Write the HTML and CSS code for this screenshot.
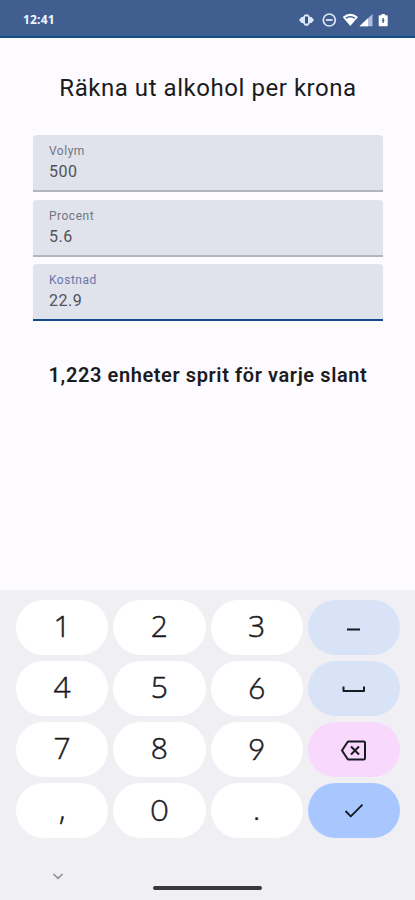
FILE: index.html
```html
<!DOCTYPE html>
<html lang="sv">
<head>
<meta charset="utf-8">
<meta name="viewport" content="width=device-width, initial-scale=1">
<title>Räkna ut alkohol per krona</title>
<link rel="stylesheet" href="styles.css">
</head>
<body>
<header class="status">
  <span class="clock">12:41</span>
  <svg class="status-icons" width="90" height="16" viewBox="0 0 90 16" aria-hidden="true">
    <path d="M0 8L2.500 5H4L5.500 2.800Q7.500 1.600 9.500 2.800L11 5H12.500L15 8L12.500 11H11L9.500 13.200Q7.500 14.400 5.500 13.200L4 11H2.500Z" fill="#dce6fa"/>
    <rect x="6" y="4.500" width="3" height="7" rx=".5" fill="#33558a"/>
    <circle cx="30.300" cy="8" r="6" fill="none" stroke="#dce6fa" stroke-width="1.700"/>
    <path d="M27 8h6.600" stroke="#dce6fa" stroke-width="1.800"/>
    <path d="M43.700 5Q51.300-1.500 59 5L51.300 14Z" fill="#fff"/>
    <path d="M46.700 6.300Q51.300 2.800 56 6.300" fill="none" stroke="#33558a" stroke-width="1.300"/>
    <path d="M60.500 14.200L73.500 2V14.200Z" fill="#aebedb"/>
    <path d="M60.500 14.200L69 6.200V14.200Z" fill="#fff"/>
    <path d="M80.500 3.200h2V2h3.400v1.200h2q.8 0 .8.800v9.400q0 .8-.8.800h-7.400q-.8 0-.8-.8V4q0-.8.8-.8Z" fill="#fff"/>
    <path d="M84.200 6v5M83 8.500h2.400" stroke="#47658f" stroke-width="1.300"/>
  </svg>
</header>
<main class="content">
  <h1 class="title">Räkna ut alkohol per krona</h1>
  <form class="fields">
    <div class="field"><span class="label">Volym</span><span class="value">500</span></div>
    <div class="field"><span class="label">Procent</span><span class="value">5.6</span></div>
    <div class="field focused"><span class="label">Kostnad</span><span class="value">22.9</span></div>
  </form>
  <p class="result">1,223 enheter sprit för varje slant</p>
</main>
<section class="keyboard">
  <div class="keys">
    <div class="key digit">1</div><div class="key digit">2</div><div class="key digit">3</div>
    <div class="key tonal"><svg width="30" height="30" viewBox="0 0 30 30"><path d="M8 16.500h13" stroke-width="2"/></svg></div>
    <div class="key digit">4</div><div class="key digit">5</div><div class="key digit geometric">6</div>
    <div class="key tonal"><svg width="30" height="30" viewBox="0 0 30 30"><path d="M4.500 12.500v4.500h20.500v-4.500" stroke-width="2"/></svg></div>
    <div class="key digit">7</div><div class="key digit">8</div><div class="key digit geometric">9</div>
    <div class="key erase"><svg width="30" height="30" viewBox="0 0 30 30"><path d="M9.500 6.500H24.700Q26 6.500 26 7.800V23.200Q26 24.500 24.700 24.500H9.500Q8.800 24.500 8.400 23.800L3 15.500L8.400 7.200Q8.800 6.500 9.500 6.500ZM12 11.500l8 8M20 11.500l-8 8" stroke-width="2"/></svg></div>
    <div class="key digit">,</div><div class="key digit geometric">0</div><div class="key digit">.</div>
    <div class="key confirm"><svg width="30" height="30" viewBox="0 0 30 30"><path d="M6.500 15l5.300 5.300L23.500 8.700" stroke-width="1.900"/></svg></div>
  </div>
  <footer class="navbar">
    <svg class="collapse" width="12" height="8" viewBox="0 0 12 8"><path d="M1.500 2L6 6.300L10.500 2" fill="none" stroke="#929198" stroke-width="1.700"/></svg>
    <span class="handle"></span>
  </footer>
</section>
</body>
</html>
```
FILE: styles.css
```css
* { box-sizing: border-box; }

body {
  margin: 0;
  height: 900px;
  display: flex;
  flex-direction: column;
  overflow: hidden;
  background: #fdfbff;
  color: #1b1b1e;
  font-family: Roboto, "Liberation Sans", sans-serif;
}

.status {
  flex: none;
  height: 38px;
  padding: 0 26px 0 23px;
  display: flex;
  align-items: center;
  justify-content: space-between;
  background: #405f90;
  border-bottom: 2px solid #134b85;
  color: #f1f5ff;
}

.clock {
  font: 700 12px/16px "Open Sans", sans-serif;
  letter-spacing: 0.200px;
  margin-top: 4px;
}

.status-icons { margin-top: 3px; }

.content {
  flex: 1;
  padding: 34px 32px 0 33px;
}

.title {
  margin: 0;
  font-size: 24px;
  font-weight: 400;
  line-height: 32px;
  letter-spacing: 0.550px;
  text-align: center;
  white-space: nowrap;
}

.fields {
  margin-top: 31px;
  display: grid;
  grid-auto-rows: 57px;
  row-gap: 7.700px;
}

.field {
  padding: 9px 16px 0;
  display: flex;
  flex-direction: column;
  background: #e0e2ec;
  border-radius: 4px 4px 0 0;
  border-bottom: 2px solid #b4b4bb;
}

.label {
  font-size: 12px;
  line-height: 15px;
  letter-spacing: 0.500px;
  color: #74767f;
}

.value {
  font-size: 16px;
  line-height: 25px;
  letter-spacing: 0.500px;
  color: #515359;
}

.focused { border-bottom: 2px solid #12498a; }
.focused .label { color: #6877a9; }

.result {
  margin: 41px -10px 0;
  font-size: 20px;
  font-weight: 600;
  line-height: 26px;
  letter-spacing: 0.600px;
  text-align: center;
  white-space: nowrap;
}

.keyboard {
  flex: none;
  height: 310px;
  padding: 10px 15px 0 16px;
  background: #f0f0f4;
}

.keys {
  display: grid;
  grid-template-columns: repeat(4, 1fr);
  grid-auto-rows: 55px;
  gap: 6px 5px;
}

.key {
  display: flex;
  align-items: center;
  justify-content: center;
  border-radius: 28px;
  background: #fff;
}

.digit {
  padding-bottom: 3px;
  font: 300 30px/50px "Open Sans", sans-serif;
  -webkit-text-stroke: 0.500px currentColor;
}

.geometric {
  padding-bottom: 4px;
  font-family: Lato, sans-serif;
}

.key svg {
  fill: none;
  stroke: #171a20;
  stroke-linejoin: round;
}

.tonal { background: #d9e3f8; }
.erase { background: #f9d8fd; }
.confirm { background: #a9c7ff; }

.navbar {
  margin-top: 34px;
  padding-left: 36px;
  display: flex;
  align-items: flex-start;
}

.handle {
  width: 109px;
  height: 4px;
  margin: 14px 0 0 89px;
  border-radius: 2px;
  background: #38373d;
}
```
